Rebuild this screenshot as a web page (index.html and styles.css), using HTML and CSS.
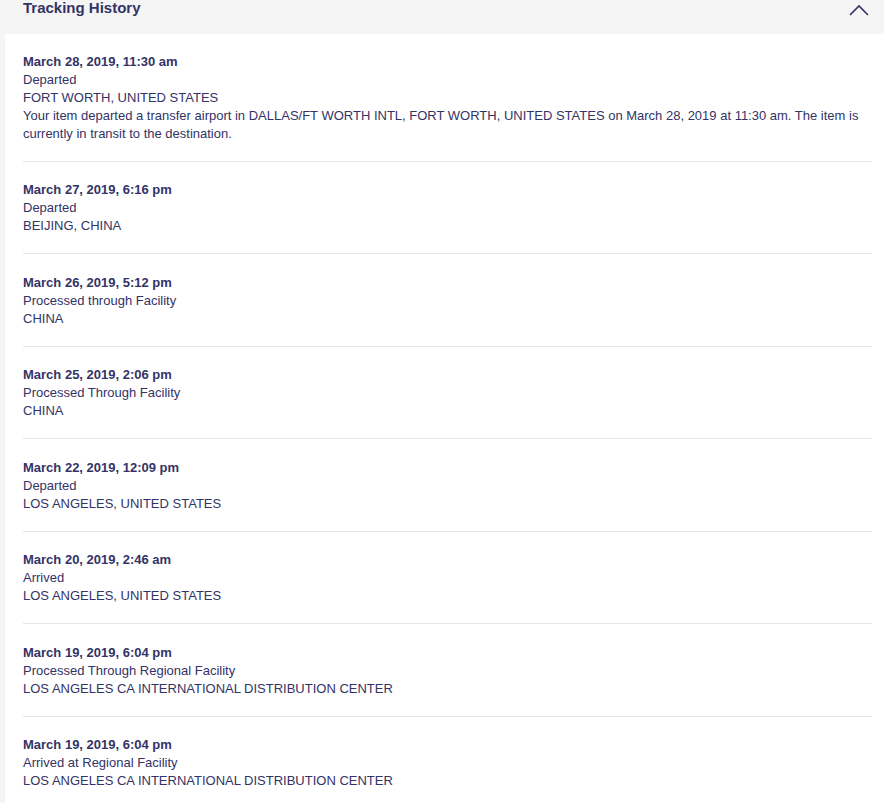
FILE: index.html
```
<!DOCTYPE html>
<html lang="en">
<head>
  <meta charset="UTF-8" />
  <title>Tracking History</title>
  <link rel="stylesheet" href="styles.css">
</head>
<body>
  <div class="history">
    <div class="history-head">
      <h2>Tracking History</h2>
      <svg class="toggle" width="20" height="12" viewBox="0 0 20 12">
        <polyline points="1,11 10,2 19,11" fill="none" stroke="#333366" stroke-width="1.6" />
      </svg>
    </div>
    <div class="history-body">
      <div class="event">
        <div class="when">March 28, 2019, 11:30 am</div>
        <div>Departed</div>
        <div>FORT WORTH, UNITED STATES</div>
        <div>Your item departed a transfer airport in DALLAS/FT WORTH INTL, FORT WORTH, UNITED STATES on March 28, 2019 at 11:30 am. The item is currently in transit to the destination.</div>
      </div>
      <div class="event">
        <div class="when">March 27, 2019, 6:16 pm</div>
        <div>Departed</div>
        <div>BEIJING, CHINA</div>
      </div>
      <div class="event">
        <div class="when">March 26, 2019, 5:12 pm</div>
        <div>Processed through Facility</div>
        <div>CHINA</div>
      </div>
      <div class="event">
        <div class="when">March 25, 2019, 2:06 pm</div>
        <div>Processed Through Facility</div>
        <div>CHINA</div>
      </div>
      <div class="event">
        <div class="when">March 22, 2019, 12:09 pm</div>
        <div>Departed</div>
        <div>LOS ANGELES, UNITED STATES</div>
      </div>
      <div class="event">
        <div class="when">March 20, 2019, 2:46 am</div>
        <div>Arrived</div>
        <div>LOS ANGELES, UNITED STATES</div>
      </div>
      <div class="event">
        <div class="when">March 19, 2019, 6:04 pm</div>
        <div>Processed Through Regional Facility</div>
        <div>LOS ANGELES CA INTERNATIONAL DISTRIBUTION CENTER</div>
      </div>
      <div class="event">
        <div class="when">March 19, 2019, 6:04 pm</div>
        <div>Arrived at Regional Facility</div>
        <div>LOS ANGELES CA INTERNATIONAL DISTRIBUTION CENTER</div>
      </div>
    </div>
  </div>
</body>
</html>
```

FILE: styles.css
```
body {
  margin: 0;
  background-color: #f5f5f5;
  font-family: "Liberation Sans", Arial, sans-serif;
  color: #333366;
  font-size: 13px;
  line-height: 18px;
}
.history-head {
  height: 34px;
  display: flex;
  justify-content: space-between;
  padding: 0 15px 0 23px;
}
.history-head h2 {
  margin: 0;
  font-size: 15px;
  line-height: 16px;
  font-weight: bold;
}
.toggle {
  margin-top: 4px;
}
.history-body {
  margin-left: 5px;
  background-color: #ffffff;
  padding: 19px 12px 0 18px;
}
.event {
  padding: 0 0 18px;
  margin-bottom: 19.5px;
  border-bottom: 1px solid #e6e6e6;
}
.event:first-child {
  padding-bottom: 18px;
  margin-bottom: 19px;
}
.event:last-child {
  border-bottom: none;
}
.when {
  font-weight: bold;
}
```
